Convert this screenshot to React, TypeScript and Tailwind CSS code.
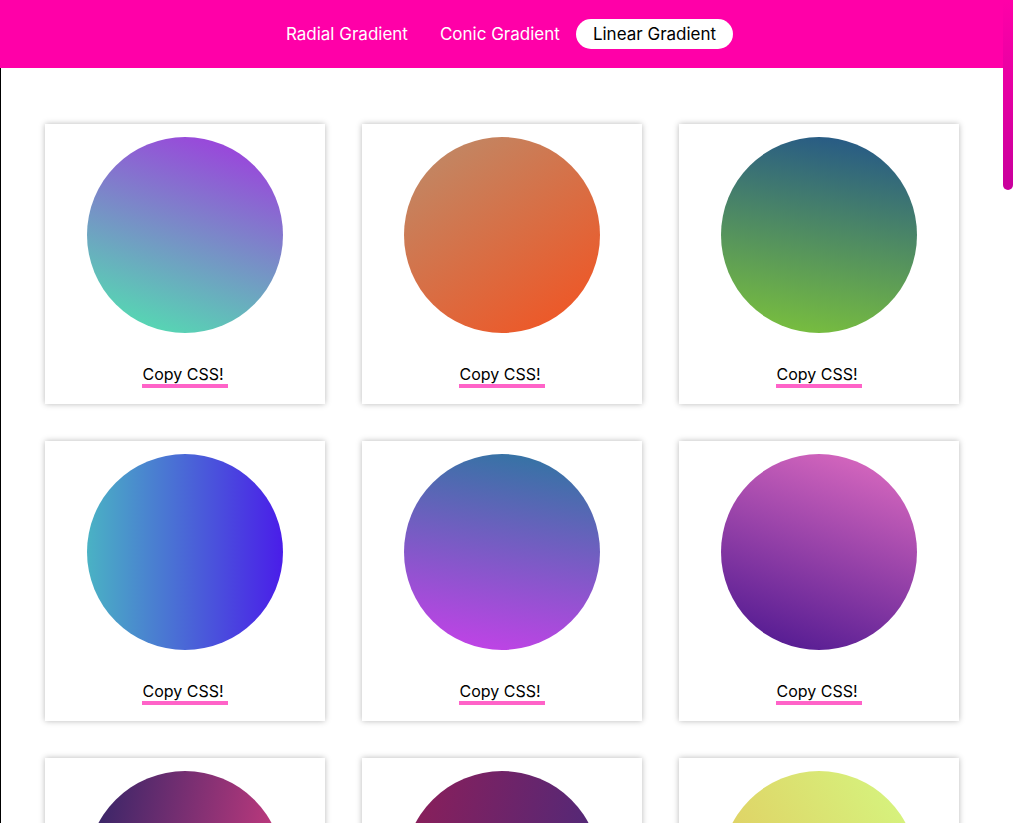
import React from "react";

const gradients: string[] = [
  "bg-[linear-gradient(20deg,#4ee8ae,#a234e0)]",
  "bg-[linear-gradient(145deg,#bb8d6c,#f4511f)]",
  "bg-[linear-gradient(190deg,#22548a,#7dc43a)]",
  "bg-[linear-gradient(90deg,#4ab2c4,#4a1de9)]",
  "bg-[linear-gradient(190deg,#2c76a0,#c840ea)]",
  "bg-[linear-gradient(20deg,#48148e,#e26ec2)]",
  "bg-[linear-gradient(100deg,#2e2466,#d33c80)]",
  "bg-[linear-gradient(100deg,#8e1e58,#4a2a7c)]",
  "bg-[linear-gradient(60deg,#e4c45a,#d4f882)]",
];

function Card({ g }: { g: string }) {
  return (
    <div className="w-[280px] h-[280px] bg-white shadow-[0_0_6px_rgba(0,0,0,0.28)] flex flex-col items-center pt-[13px]">
      <div className={`w-[196px] h-[196px] shrink-0 rounded-full ${g}`} />
      <span className="mt-[31px] text-[16px] leading-[20px] text-black pr-[4px] border-b-4 border-[#ff63c8]">
        Copy CSS!
      </span>
    </div>
  );
}

export default function App() {
  return (
    <div
      className="h-screen w-full flex overflow-hidden bg-white"
      style={{ fontFamily: "Inter, 'Open Sans', sans-serif" }}
    >
      <div className="flex-1 min-w-0 flex flex-col">
        <header className="h-[68px] shrink-0 bg-[#ff00a8] flex items-center justify-center">
          <nav className="flex items-center">
            <a className="px-[16px] py-[5px] text-[17px] leading-[20px] text-white">Radial Gradient</a>
            <a className="px-[16px] py-[5px] text-[17px] leading-[20px] text-white">Conic Gradient</a>
            <a className="px-[17px] py-[5px] text-[17px] leading-[20px] text-black bg-white rounded-full">Linear Gradient</a>
          </nav>
        </header>
        <main className="flex-1 border-l border-black pt-[56px]">
          <div className="grid grid-cols-[repeat(3,280px)] gap-[37px] justify-center">
            {gradients.map((g, i) => (
              <Card key={i} g={g} />
            ))}
          </div>
        </main>
      </div>
      <div className="w-[10px] shrink-0 bg-white">
        <div className="h-[190px] w-full rounded-b-[5px] bg-[linear-gradient(180deg,#ff00a8,#c8009c)]" />
      </div>
    </div>
  );
}
